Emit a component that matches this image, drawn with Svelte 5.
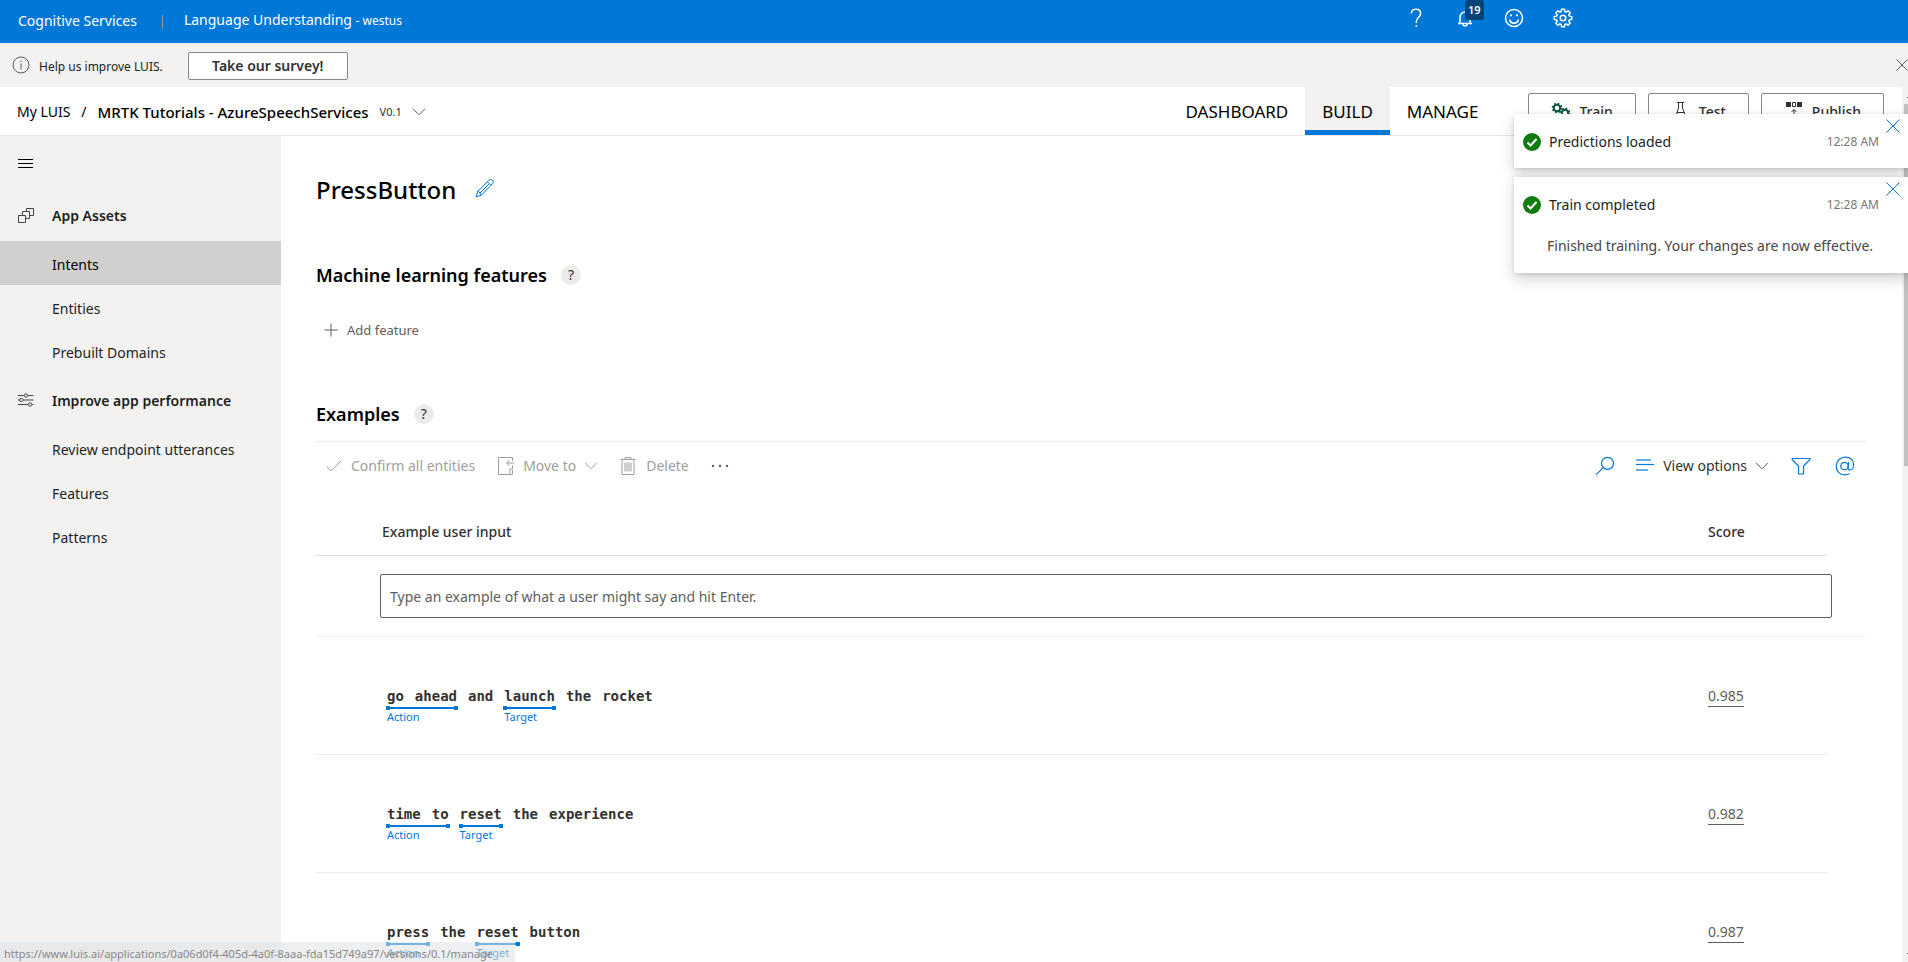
<script>
  const assets = ['Intents', 'Entities', 'Prebuilt Domains'];
  const improve = ['Review endpoint utterances', 'Features', 'Patterns'];
  const tabs = ['DASHBOARD', 'BUILD', 'MANAGE'];
  const examples = [
    {
      score: '0.985',
      parts: [
        { words: ['go', 'ahead'], entity: 'Action' },
        { words: ['and'] },
        { words: ['launch'], entity: 'Target' },
        { words: ['the'] },
        { words: ['rocket'] }
      ]
    },
    {
      score: '0.982',
      parts: [
        { words: ['time', 'to'], entity: 'Action' },
        { words: ['reset'], entity: 'Target' },
        { words: ['the'] },
        { words: ['experience'] }
      ]
    },
    {
      score: '0.987',
      parts: [
        { words: ['press'], entity: 'Action' },
        { words: ['the'] },
        { words: ['reset'], entity: 'Target' },
        { words: ['button'] }
      ]
    }
  ];
  const toasts = [
    { title: 'Predictions loaded', time: '12:28 AM' },
    {
      title: 'Train completed',
      time: '12:28 AM',
      body: 'Finished training. Your changes are now effective.'
    }
  ];
</script>

{#snippet chevron()}
  <svg class="chevron" width="14" height="8" viewBox="0 0 14 8"><path d="M1 .8l6 6 6-6" /></svg>
{/snippet}

<div class="page">
  <header class="topbar">
    <a class="brand" href="#services">Cognitive Services</a>
    <span class="divider"></span>
    <a class="product" href="#luis">Language Understanding <small>- westus</small></a>
    <div class="topicons">
      <button aria-label="Help">
        <svg width="20" height="20" viewBox="0 0 20 20"><path d="M5.300 5.500C5.300 3 7.300 1.200 10 1.200s4.600 1.700 4.600 4.200c0 4-4.300 4.300-4.300 8.300v1.300M10.300 17v2" /></svg>
      </button>
      <button aria-label="Notifications" class="bell">
        <svg width="20" height="20" viewBox="0 0 20 20"><path d="M3 15.500h14M5 15.500V9a5 5 0 0 1 10 0v6.500M8 16a2 2 0 0 0 4 0" /></svg>
        <span class="count">19</span>
      </button>
      <button aria-label="Feedback">
        <svg width="20" height="20" viewBox="0 0 20 20"><circle cx="10" cy="10" r="8.500" /><path d="M5.500 11.500a4.600 4.600 0 0 0 9 0" /><circle class="dot" cx="7" cy="7.300" r="1.100" /><circle class="dot" cx="13" cy="7.300" r="1.100" /></svg>
      </button>
      <button aria-label="Settings">
        <svg width="20" height="20" viewBox="0 0 20 20"><path d="M8.600 1.300h2.800l.4 2.200 1.300.6 2-1.300 2 2-1.300 2 .6 1.400 2.300.4v2.800l-2.300.4-.6 1.400 1.300 2-2 2-2-1.300-1.300.6-.4 2.200H8.600l-.4-2.200-1.300-.6-2 1.300-2-2 1.300-2-.6-1.400-2.300-.4V8.600l2.300-.4.6-1.400-1.300-2 2-2 2 1.300 1.300-.6z" /><circle cx="10" cy="10" r="2.800" /></svg>
      </button>
    </div>
  </header>

  <div class="survey">
    <svg class="info" width="18" height="18" viewBox="0 0 18 18"><circle cx="9" cy="9" r="8" /><path d="M9 7.500v6M9 4.500v1.500" /></svg>
    <span class="ask">Help us improve LUIS.</span>
    <button class="take">Take our survey!</button>
    <button class="dismiss" aria-label="Dismiss"><svg width="12" height="12" viewBox="0 0 12 12"><path d="M.5.5l11 11M11.500.5l-11 11" /></svg></button>
  </div>

  <div class="below">
    <div class="app">
      <div class="appbar">
        <nav class="crumbs">
          <a href="#apps">My LUIS</a>
          <span>/</span>
          <strong>MRTK Tutorials - AzureSpeechServices</strong>
          <button class="version">V0.1 {@render chevron()}</button>
        </nav>
        <nav class="tabs">
          {#each tabs as tab}
            <a href="#{tab.toLowerCase()}" class:active={tab === 'BUILD'}>{tab}</a>
          {/each}
        </nav>
        <div class="actions">
          <button>
            <svg width="20" height="20" viewBox="0 0 20 20"><g class="cogs"><circle cx="6" cy="6" r="3.200" /><circle cx="14" cy="11" r="3.200" /></g><g class="teeth"><circle cx="6" cy="6" r="4.600" /><circle cx="14" cy="11" r="4.600" /></g></svg>Train
          </button>
          <button>
            <svg width="20" height="20" viewBox="0 0 20 20"><path d="M6 .5h7M7.500.5V6L4 16.500h11.500L11.500 6V.5M6 10.500h7.500" /></svg>Test
          </button>
          <button>
            <svg width="20" height="20" viewBox="0 0 20 20"><path class="solid" d="M2 0h5v5H2zM13 0h5v5h-5z" /><path d="M8.500.5h3v4h-3zM10 17V7.500M7.500 10L10 7.500l2.500 2.500" /></svg>Publish
          </button>
        </div>
      </div>

      <div class="body">
        <aside class="sidebar">
          <button class="menu" aria-label="Collapse menu"><svg width="16" height="11" viewBox="0 0 16 11"><path d="M0 1.500h15M0 5.500h15M0 9.500h15" /></svg></button>
          <h3>
            <svg width="16" height="16" viewBox="0 0 16 16"><path d="M.5 7.500h7v7h-7zM4.500 7.500v-4h7v7h-4M8.500 3.500v-3h7v7h-4" /></svg>App Assets
          </h3>
          {#each assets as item}
            <a href="#{item}" class:selected={item === 'Intents'}>{item}</a>
          {/each}
          <h3>
            <svg width="16" height="16" viewBox="0 0 16 16"><path d="M0 2.500h6M10 2.500h5.500M0 7h1.500M5 7h10.500M0 11.500h10M14 11.500h1.500" /><circle cx="8" cy="2.500" r="1.700" /><circle cx="3.300" cy="7" r="1.700" /><circle cx="12" cy="11.500" r="1.700" /></svg>Improve app performance
          </h3>
          {#each improve as item}
            <a href="#{item}">{item}</a>
          {/each}
        </aside>

        <main>
          <h1>
            PressButton
            <button aria-label="Rename intent"><svg width="20" height="20" viewBox="0 0 20 20"><path d="M1.200 18.800l1.400-5.200L14 2.200c1-1 2.500-1 3.500 0s1 2.500 0 3.600L6.200 17.300zM2.600 13.600c2 .2 3.400 1.600 3.600 3.700M12.500 3.700l3.700 3.700M4.500 15.500l9.800-9.800" /></svg></button>
          </h1>
          <h2>Machine learning features <button class="help" aria-label="About features">?</button></h2>
          <button class="add"><svg width="14" height="14" viewBox="0 0 14 14"><path d="M7 .5v13M.5 7h13" /></svg>Add feature</button>
          <h2>Examples <button class="help" aria-label="About examples">?</button></h2>

          <div class="toolbar">
            <button disabled class="confirm"><svg width="16" height="16" viewBox="0 0 16 16"><path d="M.5 8.500l4.500 4.300L15 3" /></svg>Confirm all entities</button>
            <button disabled class="move">
              <svg width="18" height="20" viewBox="0 0 18 20"><path d="M15.500 5V1.500h-14v17h14V14M17 7h-7M12.500 4L9.500 7l3 3M13 18v-5h2.500V9.500" /></svg>Move to {@render chevron()}
            </button>
            <button disabled class="delete">
              <svg width="16" height="20" viewBox="0 0 16 20"><path d="M.5 3.500h15M5 3.500v-2h6v2M2 3.500v15h12v-15M5 6.500v9M7 6.500v9M9 6.500v9M11 6.500v9" /></svg>Delete
            </button>
            <button aria-label="More" class="more"><svg width="18" height="4" viewBox="0 0 18 4"><circle cx="2" cy="2" r="1.200" /><circle cx="9" cy="2" r="1.200" /><circle cx="16" cy="2" r="1.200" /></svg></button>
            <div class="tools">
              <button aria-label="Search"><svg width="20" height="20" viewBox="0 0 20 20"><circle cx="12.500" cy="7.300" r="6" /><path d="M8.200 11.600L1 18.800" /></svg></button>
              <button class="view">
                <svg width="20" height="20" viewBox="0 0 20 20"><path class="thin" d="M1 4h15M1 14h12" /><path d="M1 8.500h18" /></svg>View options {@render chevron()}
              </button>
              <button aria-label="Filter"><svg width="20" height="20" viewBox="0 0 20 20"><path d="M1.200 2.500h17.600v1.300L12.500 10v8h-5v-8L1.200 3.800z" /></svg></button>
              <button aria-label="Entities"><svg width="20" height="20" viewBox="0 0 20 20"><circle cx="9.500" cy="10" r="3.700" /><path d="M13.700 6l-.6 6c-.1 1.300.6 2 1.600 2 2 0 4-2 4-5.300 0-4.500-3.600-7.500-8.300-7.500C5 1.200 1.200 5 1.200 10.200c0 5 3.500 8.600 8.600 8.600 1.800 0 3.400-.4 4.800-1.100" /></svg></button>
            </div>
          </div>

          <table>
            <thead>
              <tr><th scope="col">Example user input</th><th scope="col" class="score">Score</th></tr>
            </thead>
            <tbody>
              <tr>
                <td colspan="2" class="entry"><div><input aria-label="Example user input" placeholder="Type an example of what a user might say and hit Enter." /></div></td>
              </tr>
              {#each examples as example}
                <tr class="example">
                  <td>
                    <div class="utterance">
                      {#each example.parts as part}
                        <span class="part">
                          <span class="words">{#each part.words as word}<span>{word}</span>{/each}</span>
                          {#if part.entity}<span class="bar"></span><a href="#{part.entity}">{part.entity}</a>{/if}
                        </span>
                      {/each}
                    </div>
                  </td>
                  <td class="score"><a href="#score">{example.score}</a></td>
                </tr>
              {/each}
            </tbody>
          </table>
        </main>
      </div>
    </div>
    <div class="scroll"><i class="tick"></i><i class="thumb"></i><i class="tick end"></i></div>
  </div>

  <div class="toasts">
    {#each toasts as toast}
      <section class="toast">
        <button aria-label="Close"><svg width="14" height="14" viewBox="0 0 14 14"><path d="M.5.5l13 13M13.500.5l-13 13" /></svg></button>
        <div class="line">
          <svg width="18" height="18" viewBox="0 0 18 18"><circle cx="9" cy="9" r="9" /><path d="M4.500 9.500l3 3 6-6.500" /></svg>
          <span>{toast.title}</span>
          <time>{toast.time}</time>
        </div>
        {#if toast.body}<p>{toast.body}</p>{/if}
      </section>
    {/each}
  </div>

  <div class="status">https://www.luis.ai/applications/0a06d0f4-405d-4a0f-8aaa-fda15d749a97/versions/0.1/manage</div>
</div>

<style>
  :global(body) { overflow: hidden; }
  .page {
    display: flex;
    flex-direction: column;
    height: 100vh;
    overflow: hidden;
    position: relative;
    background: #fff;
    color: #201f1e;
    font: 14px/20px "Noto Sans", "Open Sans", sans-serif;
  }
  h1, h2, h3, p { margin: 0; }
  button {
    display: flex;
    align-items: center;
    padding: 0;
    border: 0;
    background: none;
    font: inherit;
    color: inherit;
  }
  a { color: inherit; text-decoration: none; }
  svg { fill: none; stroke: currentColor; flex: none; }
  .chevron { color: #605e5c; }

  .topbar {
    display: flex;
    align-items: center;
    flex: none;
    height: 43px;
    padding: 0 0 2px 18px;
    box-sizing: border-box;
    position: relative;
    background: #0078d7;
    color: #fff;
  }
  .divider { width: 1px; height: 14px; margin: 2px 21px 0 25px; background: #8a99a8; }
  .product small { font-size: 12px; }
  .topicons { display: flex; gap: 29px; margin-left: auto; margin-right: 335px; padding-bottom: 6px; }
  .topicons svg { stroke-width: 1.500; }
  .topicons .dot { fill: #fff; stroke: none; }
  .bell { position: relative; }
  .count {
    position: absolute;
    left: 10px;
    top: -8px;
    padding: 0 3px;
    border-radius: 3px;
    background: #004578;
    font-size: 11px;
    font-weight: 600;
    line-height: 20px;
  }

  .survey {
    display: flex;
    align-items: center;
    flex: none;
    height: 44px;
    padding-left: 12px;
    background: #f3f2f1;
    font-size: 12px;
  }
  .info { color: #605e5c; margin-right: 9px; }
  .ask { padding-top: 4px; }
  .take {
    justify-content: center;
    width: 160px;
    height: 28px;
    margin: 1px 0 0 25px;
    border: 1px solid #8a8886;
    border-radius: 2px;
    background: #fff;
    color: #323130;
    font-size: 14px;
    font-weight: 600;
  }
  .dismiss { margin-left: auto; color: #605e5c; }

  .below { display: flex; flex: 1; min-height: 0; }
  .app { display: flex; flex-direction: column; flex: 1; min-width: 0; }
  .scroll { display: flex; flex-direction: column; align-items: flex-end; width: 6px; background: #f1f1f1; }
  .tick { width: 1px; height: 1px; margin: 10px 0 6px; background: #505050; }
  .end { margin: auto 0 8px; }
  .thumb { width: 4px; height: 362px; background: #c1c1c1; }

  .appbar {
    display: flex;
    flex: none;
    height: 48px;
    padding: 0 18px 0 17px;
    border-bottom: 1px solid #e8e6e4;
    color: #000;
  }
  .crumbs { display: flex; align-items: center; gap: 11px; padding-top: 2px; }
  .crumbs strong { font-size: 15px; font-weight: 500; }
  .version { gap: 10px; font-size: 11px; color: #323130; }
  .tabs { display: flex; margin-left: auto; font-size: 17px; }
  .tabs a { display: flex; align-items: center; padding: 6px 17px 0; border-bottom: 5px solid transparent; }
  .tabs .active { background: #f3f2f1; border-color: #0078d7; }
  .actions { display: flex; gap: 12px; padding-top: 6px; margin-left: 33px; }
  .actions button {
    gap: 8px;
    height: 38px;
    padding: 0 22px;
    border: 1px solid #8a8886;
    border-radius: 2px;
    background: #fff;
    color: #323130;
    font-weight: 500;
  }
  .cogs { stroke: #0b5a3c; stroke-width: 2; }
  .teeth { stroke: #0b5a3c; stroke-width: 1.500; stroke-dasharray: 1.800 1.813; }
  .solid { fill: #323130; stroke: none; }

  .body { display: flex; flex: 1; min-height: 0; }
  .sidebar { flex: none; width: 281px; background: #f3f2f1; color: #201f1e; }
  .menu { height: 11px; margin: 22px 0 19px 18px; color: #000; }
  .sidebar h3 {
    display: flex;
    align-items: center;
    gap: 18px;
    height: 53px;
    padding: 2px 0 0 18px;
    font-size: 14px;
    font-weight: 600;
    box-sizing: border-box;
  }
  .sidebar h3 svg { color: #484644; }
  .sidebar a { display: flex; align-items: center; height: 44px; padding: 4px 0 0 52px; box-sizing: border-box; }
  .sidebar .selected { background: #d2d0ce; color: #000; }

  main { flex: 1; min-width: 0; padding: 34px 35px 0; color: #000; }
  h1 { display: flex; align-items: center; gap: 19px; height: 40px; font-size: 24px; font-weight: 500; }
  h1 button { color: #0078d7; padding-bottom: 4px; }
  h2 { display: flex; align-items: center; gap: 14px; height: 24px; margin-top: 53px; font-size: 18px; font-weight: 600; }
  .help { justify-content: center; width: 20px; height: 20px; border-radius: 10px; background: #edebe9; font-size: 14px; font-weight: 400; color: #323130; }
  .add { gap: 9px; margin: 33px 0 62px 8px; font-size: 13px; color: #605e5c; }
  .add + h2 { margin-top: 0; }

  .toolbar {
    display: flex;
    align-items: center;
    height: 48px;
    margin-top: 15px;
    padding: 0 12px 0 10px;
    border-top: 1px solid #edebe9;
    color: #323130;
  }
  .toolbar button:disabled, .toolbar :disabled .chevron { color: #a19f9d; }
  .confirm { gap: 9px; }
  .move { gap: 8px; margin-left: 22px; }
  .delete { gap: 10px; margin-left: 22px; }
  .more { margin-left: 22px; }
  .more svg { fill: #605e5c; stroke: none; }
  .tools { display: flex; align-items: center; gap: 24px; margin-left: auto; }
  .tools button > svg:not(.chevron) { color: #0078d7; stroke-width: 1.200; }
  .tools button .thin { stroke-opacity: .6; stroke-width: 2; }
  .view { gap: 8px; margin: 0 -2px 0 -4px; }

  table { width: calc(100% - 40px); margin-top: 22px; border-spacing: 0; table-layout: fixed; }
  th, td { padding: 0; text-align: left; }
  th { height: 39px; padding: 0 0 4px 66px; border-bottom: 1px solid #e1dfdd; font-weight: 500; color: #323130; }
  .score { width: 119px; padding-left: 0; }
  .entry div {
    margin-right: -40px;
    padding: 18px 35px 18px 64px;
    border-bottom: 1px solid #f3f2f1;
  }
  input {
    display: block;
    width: 100%;
    height: 44px;
    box-sizing: border-box;
    padding: 0 9px;
    border: 1px solid #605e5c;
    border-radius: 2px;
    font: inherit;
    color: #323130;
  }
  input::placeholder { color: #605e5c; opacity: 1; }
  .example td { height: 117px; border-bottom: 1px solid #edebe9; vertical-align: top; }
  .utterance {
    display: flex;
    gap: 11px;
    padding: 49px 0 0 71px;
    font: bold 14px/20px "DejaVu Sans Mono", "Liberation Mono", monospace;
    color: #323130;
  }
  .part { display: flex; flex-direction: column; }
  .words { display: flex; gap: 11px; }
  .bar { height: 2px; margin: 1px -1px 0; background: #0078d7; position: relative; }
  .bar::before, .bar::after { content: ""; position: absolute; top: -1px; width: 4px; height: 4px; background: #0078d7; }
  .bar::before { left: 0; }
  .bar::after { right: 0; }
  .part a { font: 11px/16px "Noto Sans", sans-serif; color: #0078d7; }
  .example .score { padding-top: 49px; box-sizing: border-box; color: #605e5c; }
  .score a { display: inline-block; border-bottom: 1px solid #605e5c; }

  .toasts { position: absolute; top: 114px; right: 0; width: 394px; display: grid; gap: 9px; }
  .toast { position: relative; padding: 18px 29px 16px 9px; background: #fff; box-shadow: 0 6px 14px rgba(0, 0, 0, .18), 0 1px 4px rgba(0, 0, 0, .12); }
  .toast button { position: absolute; top: 5px; right: 8px; color: #0078d7; }
  .line { display: flex; align-items: center; gap: 8px; color: #201f1e; }
  .line svg { fill: #107c10; stroke: none; }
  .line path { fill: none; stroke: #fff; stroke-width: 2; }
  time { margin-left: auto; font-size: 12px; color: #797775; }
  .toast p { padding: 21px 0 1px 24px; color: #484644; white-space: nowrap; }

  .status {
    position: absolute;
    left: 0;
    bottom: 0;
    height: 20px;
    padding: 0 22px 0 4px;
    border-top-right-radius: 3px;
    background: rgba(222, 225, 230, .55);
    color: #8a8886;
    font-size: 11px;
    line-height: 23px;
  }
</style>
